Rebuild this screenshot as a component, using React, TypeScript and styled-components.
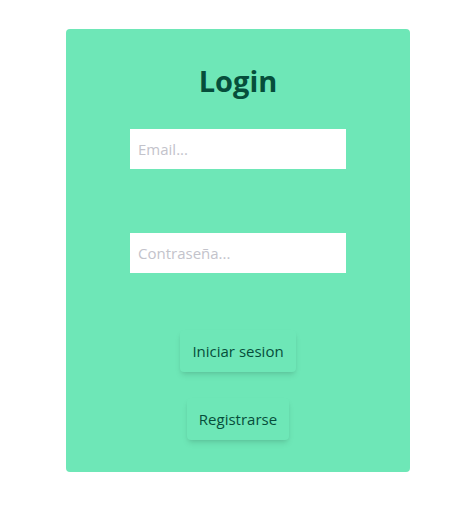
import React from "react";
import styled, { createGlobalStyle } from "styled-components";

const Global = createGlobalStyle`
  html, body { margin: 0; padding: 0; background: #ffffff; }
  body { font-family: "Open Sans", "Noto Sans", sans-serif; }
  * { box-sizing: border-box; }
`;

const Page = styled.div`
  display: flex;
  justify-content: center;
  padding: 29px 0 0 2px;
`;

const Card = styled.form`
  width: 344px;
  background: #6ee7b7;
  border-radius: 4px;
  display: flex;
  flex-direction: column;
  align-items: center;
  padding: 34px 0 32px;
`;

const Title = styled.h1`
  margin: 0 0 30px;
  font-size: 29px;
  line-height: 36px;
  font-weight: 700;
  color: #064e3b;
`;

const Input = styled.input<{ $gap: number }>`
  width: 216px;
  height: 40px;
  border: none;
  outline: none;
  padding: 0 8px;
  margin-bottom: ${(p) => p.$gap}px;
  font-family: inherit;
  font-size: 15px;
  color: #1f2937;
  background: #ffffff;
  &::placeholder { color: #c3c3cb; }
`;

const Button = styled.button<{ $gap: number }>`
  height: 42px;
  padding: 0 12px;
  margin-bottom: ${(p) => p.$gap}px;
  border: none;
  border-radius: 4px;
  background: #6ee7b7;
  color: #064e3b;
  font-family: inherit;
  font-size: 15px;
  box-shadow: 0 4px 6px -1px rgba(0, 0, 0, 0.1), 0 2px 4px -2px rgba(0, 0, 0, 0.1);
  cursor: pointer;
`;

export default function App() {
  return (
    <>
      <Global />
      <Page>
        <Card onSubmit={(e) => e.preventDefault()}>
          <Title>Login</Title>
          <Input $gap={64} type="email" placeholder="Email..." />
          <Input $gap={57} type="password" placeholder="Contraseña..." />
          <Button $gap={26} type="submit">Iniciar sesion</Button>
          <Button $gap={0} type="button">Registrarse</Button>
        </Card>
      </Page>
    </>
  );
}
